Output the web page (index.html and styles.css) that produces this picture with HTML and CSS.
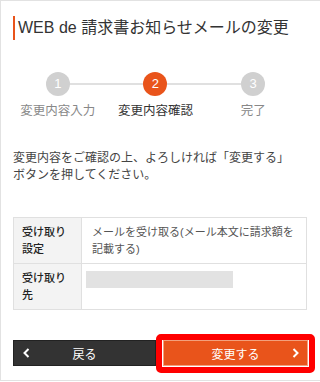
FILE: index.html
```html
<!DOCTYPE html>
<html lang="ja">
<head>
    <meta charset="UTF-8">
    <meta name="viewport" content="width=device-width, initial-scale=1.0">
    <title>WEB de 請求書お知らせメールの変更</title>
    <link rel="stylesheet" href="styles.css">
</head>
<body>
    <div class="page">
        <h1 class="title">WEB de 請求書お知らせメールの変更</h1>

        <ol class="steps">
            <li class="step"><span class="num">1</span><span class="label">変更内容入力</span></li>
            <li class="step current"><span class="num">2</span><span class="label">変更内容確認</span></li>
            <li class="step"><span class="num">3</span><span class="label">完了</span></li>
        </ol>

        <p class="lead">変更内容をご確認の上、よろしければ「変更する」<br>ボタンを押してください。</p>

        <table class="confirm">
            <tr>
                <th>受け取り<br>設定</th>
                <td>メールを受け取る(メール本文に請求額を記載する)</td>
            </tr>
            <tr>
                <th>受け取り<br>先</th>
                <td class="masked"><span class="mask"></span></td>
            </tr>
        </table>

        <div class="actions">
            <button class="btn back">
                <svg class="chev" width="7" height="10" viewBox="0 0 7 10"><polyline points="5.5,1 1.5,5 5.5,9" fill="none" stroke="#fff" stroke-width="2"/></svg>
                <span>戻る</span>
                <span></span>
            </button>
            <button class="btn submit">
                <span></span>
                <span>変更する</span>
                <svg class="chev" width="7" height="10" viewBox="0 0 7 10"><polyline points="1.5,1 5.5,5 1.5,9" fill="none" stroke="#fff" stroke-width="2"/></svg>
            </button>
        </div>
    </div>
</body>
</html>
```

FILE: styles.css
```css
* {
    margin: 0;
    padding: 0;
    box-sizing: border-box;
}

body {
    font-family: "Liberation Sans", "Noto Sans CJK JP", sans-serif;
    background: #fff;
    color: #333;
}

.page {
    height: 381px;
    border-top: 1px solid #e2e2e2;
    border-left: 1px solid #e2e2e2;
    border-bottom: 1px solid #e2e2e2;
    padding: 15px 12px 0;
    overflow: hidden;
}

.title {
    font-size: 16px;
    font-weight: normal;
    line-height: 24px;
    border-left: 2px solid #e9541b;
    padding-left: 3px;
    color: #333;
}

.steps {
    list-style: none;
    display: grid;
    grid-template-columns: repeat(3, 1fr);
    width: 293px;
    margin: 32px 0 0 -4px;
}

.step {
    position: relative;
    display: flex;
    flex-direction: column;
    align-items: center;
}

.step:not(:last-child)::after {
    content: '';
    position: absolute;
    top: 11px;
    left: 50%;
    width: 100%;
    height: 2px;
    background: #e0e0e0;
}

.num {
    position: relative;
    z-index: 1;
    width: 24px;
    height: 24px;
    border-radius: 50%;
    background: #d0d0d0;
    color: #fff;
    font-size: 13px;
    line-height: 24px;
    text-align: center;
}

.current .num {
    background: #e9541b;
}

.label {
    margin-top: 6px;
    font-size: 12.5px;
    line-height: 18px;
    color: #888;
    white-space: nowrap;
}

.current .label {
    color: #333;
}

.lead {
    margin-top: 30px;
    font-size: 12px;
    line-height: 17px;
    color: #444;
}

.confirm {
    width: 294px;
    margin-top: 33px;
    border-collapse: collapse;
    font-size: 11px;
    line-height: 17px;
}

.confirm th,
.confirm td {
    border: 1px solid #e0e0e0;
    vertical-align: top;
    text-align: left;
    padding: 6px 10px 5px;
}

.confirm th {
    width: 68px;
    padding-left: 8px;
    background: #f3f3f3;
    color: #222;
    font-weight: 500;
}

.confirm td {
    color: #555;
}

.confirm td.masked {
    padding-left: 4px;
}

.mask {
    display: block;
    width: 147px;
    height: 17px;
    margin-top: 1px;
    background: #e2e2e2;
}

.actions {
    display: flex;
    gap: 7px;
    margin-top: 30px;
    width: 295px;
}

.btn {
    display: grid;
    grid-template-columns: 14px 1fr 14px;
    align-items: center;
    justify-items: center;
    height: 26px;
    padding: 0 5px;
    font-family: inherit;
    font-size: 12px;
    color: #fff;
    cursor: pointer;
}

.back {
    flex: 1;
    background: #333;
    border: 1px solid #222;
}

.submit {
    position: relative;
    width: 145px;
    background: #e9541b;
    border: 1px solid #f3a07c;
}

/* highlight frame round the submit button */
.submit::after {
    content: '';
    position: absolute;
    top: -7px;
    left: -8px;
    right: -8px;
    bottom: -8px;
    border: 6px solid #ff0000;
    border-radius: 5px;
}
```
